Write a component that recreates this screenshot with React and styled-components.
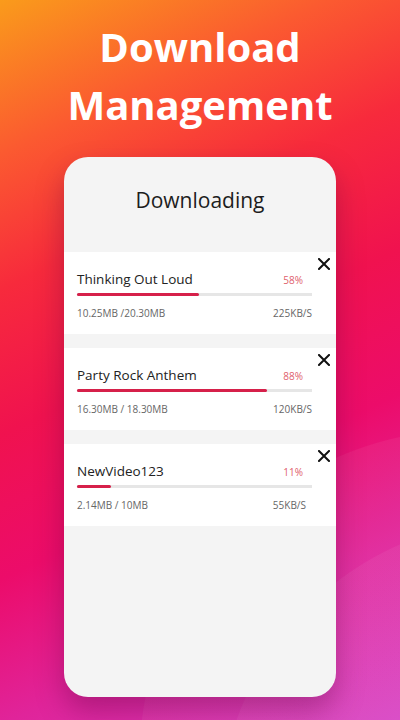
import React from 'react'
import styled, { createGlobalStyle } from 'styled-components'

const GlobalStyle = createGlobalStyle`
  html, body {
    margin: 0;
    padding: 0;
  }
  body {
    font-family: "Open Sans", "Noto Sans", sans-serif;
  }
`;

const downloads = [
  { name: 'Thinking Out Loud', percent: '58%', fill: 52, size: '10.25MB /20.30MB', speed: '225KB/S' },
  { name: 'Party Rock Anthem', percent: '88%', fill: 81, size: '16.30MB / 18.30MB', speed: '120KB/S' },
  { name: 'NewVideo123', percent: '11%', fill: 14.5, size: '2.14MB / 10MB', speed: '55KB/S', narrow: true },
];

const CloseIcon = () => (
  <svg width="12" height="12" viewBox="0 0 12 12">
    <path d="M1 1 L11 11 M11 1 L1 11" stroke="#111" strokeWidth="2" strokeLinecap="square" />
  </svg>
);

const DownloadItem = ({ item }) => (
  <Item>
    <CloseButton><CloseIcon /></CloseButton>
    <TitleRow>
      <TrackName>{item.name}</TrackName>
      <Percent>{item.percent}</Percent>
    </TitleRow>
    <Track>
      <Fill style={{ width: `${item.fill}%` }} />
    </Track>
    <InfoRow $narrow={item.narrow}>
      <span>{item.size}</span>
      <span>{item.speed}</span>
    </InfoRow>
  </Item>
);

const App = () => {
  return (
    <>
      <GlobalStyle />
      <Page>
        <Headline>
          Download
          <br />
          Management
        </Headline>
        <Phone>
          <Heading>Downloading</Heading>
          <List>
            {downloads.map((d) => (
              <DownloadItem key={d.name} item={d} />
            ))}
          </List>
        </Phone>
      </Page>
    </>
  )
}

export default App;

const Page = styled.div`
  width: 400px;
  height: 720px;
  overflow: hidden;
  display: flex;
  flex-direction: column;
  align-items: center;
  background:
    radial-gradient(circle at 470px 760px, rgba(255,255,255,0.05) 0 330px, transparent 331px),
    radial-gradient(circle at 520px 820px, rgba(255,255,255,0.05) 0 300px, transparent 301px),
    linear-gradient(155deg, #fa9b1b 0%, #fb5a30 17%, #f72a3c 32%, #f0124f 48%, #ec0c6a 64%, #e0249a 80%, #d63cc2 100%);
`;

const Headline = styled.h1`
  margin: 18px 0 0;
  font-family: "Open Sans", "Noto Sans", sans-serif;
  font-weight: 700;
  font-size: 40px;
  line-height: 58px;
  color: #fff;
  text-align: center;
`;

const Phone = styled.div`
  margin-top: 23px;
  width: 272px;
  height: 540px;
  background: #f4f4f4;
  border-radius: 24px;
  box-shadow: 0 14px 28px rgba(90, 0, 60, 0.35);
  overflow: hidden;
  display: flex;
  flex-direction: column;
`;

const Heading = styled.div`
  height: 95px;
  display: flex;
  align-items: center;
  justify-content: center;
  font-size: 21px;
  color: #1d1d1d;
  padding-bottom: 10px;
  box-sizing: border-box;
`;

const List = styled.div`
  display: flex;
  flex-direction: column;
  gap: 14px;
`;

const Item = styled.div`
  position: relative;
  height: 82px;
  background: #fff;
  padding: 18px 24px 0 13px;
  box-sizing: border-box;
`;

const CloseButton = styled.div`
  position: absolute;
  top: 6px;
  right: 6px;
  width: 12px;
  height: 12px;
  display: flex;
`;

const TitleRow = styled.div`
  display: flex;
  justify-content: space-between;
  align-items: baseline;
  padding-right: 9px;
`;

const TrackName = styled.span`
  font-size: 13.5px;
  color: #222;
`;

const Percent = styled.span`
  font-size: 10px;
  color: #e0606c;
`;

const Track = styled.div`
  margin-top: 5px;
  height: 3px;
  background: #e6e6e6;
`;

const Fill = styled.div`
  height: 100%;
  background: #d6204a;
  border-radius: 2px;
`;

const InfoRow = styled.div`
  margin-top: 10px;
  display: flex;
  justify-content: space-between;
  font-size: 10px;
  color: #666;
  padding-right: ${({ $narrow }) => ($narrow ? '6px' : '0')};
`;
